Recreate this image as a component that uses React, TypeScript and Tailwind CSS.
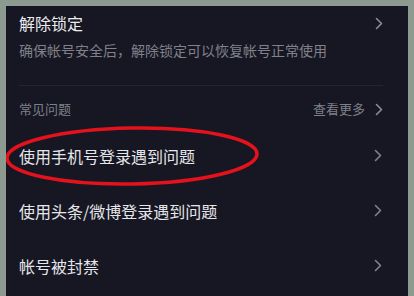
const font = { fontFamily: '"Noto Sans CJK SC", "Noto Sans", sans-serif' };

function Chevron({ className = "" }: { className?: string }) {
  return (
    <svg width="8" height="13" viewBox="0 0 8 13" className={className} fill="none">
      <path d="M1.5 1.5 L6.5 6.5 L1.5 11.5" stroke="currentColor" strokeWidth="1.6" strokeLinecap="round" strokeLinejoin="round" />
    </svg>
  );
}

const rows = ["使用手机号登录遇到问题", "使用头条/微博登录遇到问题", "帐号被封禁"];

export default function App() {
  return (
    <div className="w-[414px] h-[296px] overflow-hidden bg-[#8c9a90] pl-[6px] pt-[6px]" style={font}>
      <div className="relative w-[402px] h-[290px] bg-[#161722] pl-[13px] pr-[25px]">
        <div className="pt-[6px] flex items-center justify-between">
          <span className="text-[16px] leading-[22px] text-[#ededf0]">解除锁定</span>
          <Chevron className="text-[#8b8c95]" />
        </div>
        <div className="mt-[6px] text-[14px] leading-[20px] text-[#80818a]">
          确保帐号安全后，解除锁定可以恢复帐号正常使用
        </div>
        <div className="mt-[25px] h-px bg-[#23242f]" />
        <div className="mt-[14px] flex items-center justify-between text-[13px] leading-[18px] text-[#7f8089]">
          <span>常见问题</span>
          <span className="flex items-center gap-[10px]">
            查看更多
            <Chevron className="text-[#8b8c95]" />
          </span>
        </div>
        <div className="mt-[10px] flex flex-col">
          {rows.map((r) => (
            <div key={r} className="h-[55px] flex items-center justify-between">
              <span className="text-[16px] leading-[22px] text-[#e6e6ea]">{r}</span>
              <Chevron className="text-[#80818a] mr-[1px]" />
            </div>
          ))}
        </div>
        <svg className="absolute left-0 top-0 pointer-events-none" width="402" height="290" viewBox="0 0 402 290">
          <ellipse cx="126" cy="150" rx="125" ry="28" fill="none" stroke="#e3121c" strokeWidth="3.5" transform="rotate(-1 126 150)" />
        </svg>
      </div>
    </div>
  );
}
